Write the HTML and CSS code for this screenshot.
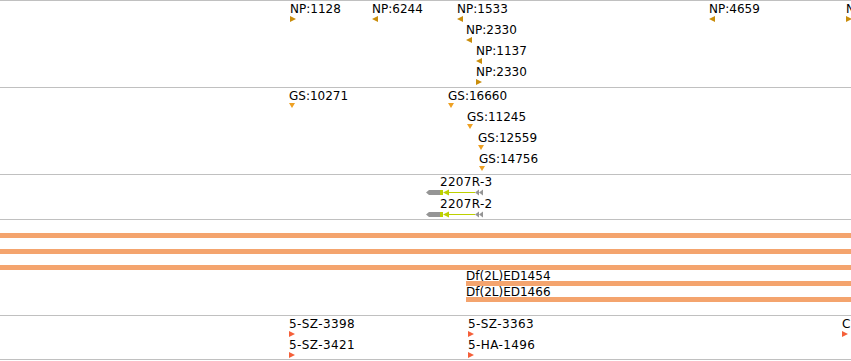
FILE: index.html
```html
<!DOCTYPE html>
<html>

<head>
    <title>Tracks</title>
    <link rel="stylesheet" href="styles.css">
</head>

<body>
    <div class="tracks">

        <!-- NP track -->
        <div class="track trackNp">
            <div class="feat r0" style="left:290px"><span class="lbl">NP:1128</span><svg class="tri np" width="6" height="6"><polygon points="0,0 6,3 0,6"/></svg></div>
            <div class="feat r0" style="left:372px"><span class="lbl">NP:6244</span><svg class="tri np" width="6" height="6"><polygon points="6,0 0,3 6,6"/></svg></div>
            <div class="feat r0" style="left:457px"><span class="lbl">NP:1533</span><svg class="tri np" width="6" height="6"><polygon points="6,0 0,3 6,6"/></svg></div>
            <div class="feat r1" style="left:466px"><span class="lbl">NP:2330</span><svg class="tri np" width="6" height="6"><polygon points="6,0 0,3 6,6"/></svg></div>
            <div class="feat r2" style="left:476px"><span class="lbl">NP:1137</span><svg class="tri np" width="6" height="6"><polygon points="6,0 0,3 6,6"/></svg></div>
            <div class="feat r3" style="left:476px"><span class="lbl">NP:2330</span><svg class="tri np" width="6" height="6"><polygon points="0,0 6,3 0,6"/></svg></div>
            <div class="feat r0" style="left:709px"><span class="lbl">NP:4659</span><svg class="tri np" width="6" height="6"><polygon points="6,0 0,3 6,6"/></svg></div>
            <div class="feat r0" style="left:846px"><span class="lbl">NP:7731</span><svg class="tri np" width="6" height="6"><polygon points="0,0 6,3 0,6"/></svg></div>
        </div>

        <!-- GS track -->
        <div class="track trackGs">
            <div class="feat r0" style="left:289px"><span class="lbl">GS:10271</span><svg class="tri gs" width="6" height="6"><polygon points="0,0 6,0 3,5"/></svg></div>
            <div class="feat r0" style="left:448px"><span class="lbl">GS:16660</span><svg class="tri gs" width="6" height="6"><polygon points="0,0 6,0 3,5"/></svg></div>
            <div class="feat r1" style="left:467px"><span class="lbl">GS:11245</span><svg class="tri gs" width="6" height="6"><polygon points="0,0 6,0 3,5"/></svg></div>
            <div class="feat r2" style="left:478px"><span class="lbl">GS:12559</span><svg class="tri gs" width="6" height="6"><polygon points="0,0 6,0 3,5"/></svg></div>
            <div class="feat r3" style="left:479px"><span class="lbl">GS:14756</span><svg class="tri gs" width="6" height="6"><polygon points="0,0 6,0 3,5"/></svg></div>
        </div>

        <!-- gene track -->
        <div class="track trackGene">
            <div class="gene g0" style="left:426px">
                <span class="lbl geneLbl">2207R-3</span>
                <svg class="geneGlyph" width="60" height="7">
                    <polygon class="utr" points="0,3.5 3,1 14,1 14,6 3,6"/>
                    <rect class="cds" x="14" y="1" width="3" height="5"/>
                    <polygon class="cds" points="17,3.5 23,0.5 23,6.5"/>
                    <line class="intron" x1="23" y1="3.5" x2="49" y2="3.5"/>
                    <polygon class="utr" points="49,3.5 53,0.5 53,6.5"/>
                    <polygon class="utr" points="53,3.5 57,0.5 57,6.5"/>
                </svg>
            </div>
            <div class="gene g1" style="left:426px">
                <span class="lbl geneLbl">2207R-2</span>
                <svg class="geneGlyph" width="60" height="7">
                    <polygon class="utr" points="0,3.5 3,1 14,1 14,6 3,6"/>
                    <rect class="cds" x="14" y="1" width="3" height="5"/>
                    <polygon class="cds" points="17,3.5 23,0.5 23,6.5"/>
                    <line class="intron" x1="23" y1="3.5" x2="49" y2="3.5"/>
                    <polygon class="utr" points="49,3.5 53,0.5 53,6.5"/>
                    <polygon class="utr" points="53,3.5 57,0.5 57,6.5"/>
                </svg>
            </div>
        </div>

        <!-- deficiency track -->
        <div class="track trackDf">
            <div class="bar b0"></div>
            <div class="bar b1"></div>
            <div class="bar b2"></div>
            <span class="lbl dfLbl d3" style="left:466px">Df(2L)ED1454</span>
            <div class="bar b3" style="left:466px"></div>
            <span class="lbl dfLbl d4" style="left:466px">Df(2L)ED1466</span>
            <div class="bar b4" style="left:466px"></div>
        </div>

        <!-- insertion track -->
        <div class="track trackIns">
            <div class="feat r0" style="left:289px"><span class="lbl">5-SZ-3398</span><svg class="tri ins" width="6" height="6"><polygon points="0,0 6,3 0,6"/></svg></div>
            <div class="feat r1" style="left:289px"><span class="lbl">5-SZ-3421</span><svg class="tri ins" width="6" height="6"><polygon points="0,0 6,3 0,6"/></svg></div>
            <div class="feat r0" style="left:468px"><span class="lbl">5-SZ-3363</span><svg class="tri ins" width="6" height="6"><polygon points="0,0 6,3 0,6"/></svg></div>
            <div class="feat r1" style="left:468px"><span class="lbl">5-HA-1496</span><svg class="tri ins" width="6" height="6"><polygon points="0,0 6,3 0,6"/></svg></div>
            <div class="feat r0" style="left:842px"><span class="lbl">CB-5805-3</span><svg class="tri ins" width="6" height="6"><polygon points="0,0 6,3 0,6"/></svg></div>
        </div>

    </div>
</body>

</html>
```

FILE: styles.css
```css
body {
    margin: 0;
    background-color: #fff;
    font-family: "DejaVu Sans", sans-serif;
    font-size: 12px;
    color: #000;
    overflow: hidden;
}

.tracks {
    width: 851px;
    border-bottom: 1px solid #c0c0c0;
}

.track {
    position: relative;
    border-top: 1px solid #c0c0c0;
    overflow: hidden;
}

.trackNp {
    height: 86px;
}

.trackGs {
    height: 86px;
}

.trackGene {
    height: 44px;
}

.trackDf {
    height: 95px;
}

.trackIns {
    height: 43px;
}

.lbl {
    display: block;
    line-height: 14px;
    white-space: nowrap;
}

.feat {
    position: absolute;
}

.feat .tri {
    display: block;
}

.r0 { top: 1px; }
.r1 { top: 22px; }
.r2 { top: 43px; }
.r3 { top: 64px; }

.trackIns .lbl {
    letter-spacing: 0.4px;
}

.np { fill: #c98d0b; }
.gs { fill: #eea124; }
.ins { fill: #f5603a; }

.gene {
    position: absolute;
}

.g0 { top: 0px; }
.g1 { top: 22px; }

.geneLbl {
    margin-left: 14px;
    letter-spacing: 0.3px;
}

.geneGlyph {
    display: block;
}

.utr { fill: #959595; }
.cds { fill: #bdd000; }
.intron {
    stroke: #bdd000;
    stroke-width: 1;
}

.bar {
    position: absolute;
    left: 0;
    right: 0;
    height: 5px;
    background-color: #f4a46e;
}

.b0 { top: 13px; }
.b1 { top: 29px; }
.b2 { top: 45px; }
.b3 { top: 61px; }
.b4 { top: 77px; }

.dfLbl {
    position: absolute;
}

.d3 { top: 49px; }
.d4 { top: 65px; }
```
